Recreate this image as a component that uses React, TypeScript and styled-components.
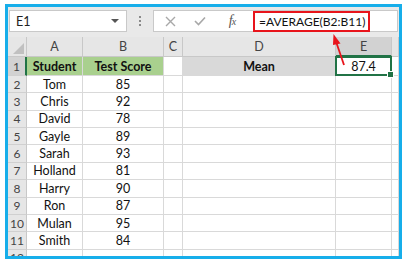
import React from "react";
import styled, { createGlobalStyle } from "styled-components";

const Global = createGlobalStyle`
  html, body { margin: 0; padding: 0; background: #ffffff; }
  body { font-family: Lato, "Open Sans", sans-serif; }
`;

const Frame = styled.div`
  position: relative;
  margin: 4px 0 0 5px;
  width: 397px;
  height: 255px;
  box-sizing: border-box;
  border: 3px solid #17aeea;
  overflow: hidden;
  background: #ffffff;
  display: flex;
  flex-direction: column;
`;

const Toolbar = styled.div`
  height: 30px;
  flex: none;
  background: #e9e9e9;
  display: flex;
  align-items: flex-start;
  padding: 3px 1px 0 1px;
  box-sizing: border-box;
`;

const NameBox = styled.div`
  position: relative;
  width: 118px;
  height: 22px;
  box-sizing: border-box;
  background: #fff;
  border: 1px solid #c9c9c9;
  font-size: 12.5px;
  color: #222;
  display: flex;
  align-items: center;
  padding-left: 6px;
`;

const DropArrow = styled.span`
  position: absolute;
  right: 7px;
  top: 8px;
  width: 0;
  height: 0;
  border-left: 4px solid transparent;
  border-right: 4px solid transparent;
  border-top: 4px solid #555;
`;

const Dots = styled.div`
  width: 26px;
  height: 22px;
  display: flex;
  flex-direction: column;
  align-items: center;
  justify-content: center;
  gap: 2px;
`;

const Dot = styled.span`
  width: 2px;
  height: 2px;
  background: #8a8a8a;
`;

const FormulaBox = styled.div`
  flex: 1;
  height: 22px;
  box-sizing: border-box;
  background: #fff;
  border: 1px solid #c9c9c9;
  display: flex;
  align-items: center;
`;

const IconSlot = styled.div<{ $w: number }>`
  width: ${(p) => p.$w}px;
  height: 20px;
  display: flex;
  align-items: center;
  justify-content: center;
  flex: none;
`;

const Fx = styled.span`
  font-family: "Liberation Serif", serif;
  font-style: italic;
  font-size: 14px;
  color: #555;
  letter-spacing: -1px;
  small { font-size: 10px; }
`;

const FormulaText = styled.div`
  margin-left: 3px;
  height: 21px;
  box-sizing: border-box;
  border: 2px solid #e8141b;
  padding: 0 0 0 4px;
  display: flex;
  align-items: center;
  font-size: 12px;
  color: #111;
  width: 117px;
  white-space: nowrap;
`;

const Grid = styled.div`
  display: grid;
  grid-template-columns: 19px 56px 81px 19px 153px 56px 1fr;
  grid-template-rows: 20px 19px repeat(10, 17.36px) 17px;
  flex: 1;
  overflow: hidden;
`;

const Corner = styled.div`
  position: relative;
  background: #e6e6e6;
  border-right: 1px solid #c8c8c8;
  border-bottom: 1px solid #c8c8c8;
  box-sizing: border-box;
  &::after {
    content: "";
    position: absolute;
    right: 2px;
    bottom: 2px;
    width: 0;
    height: 0;
    border-left: 11px solid transparent;
    border-bottom: 11px solid #c0c0c0;
  }
`;

const ColHead = styled.div<{ $active?: boolean }>`
  background: ${(p) => (p.$active ? "#d2d2d2" : "#e6e6e6")};
  border-right: 1px solid #c8c8c8;
  border-bottom: ${(p) => (p.$active ? "2px solid #217346" : "1px solid #c8c8c8")};
  box-sizing: border-box;
  display: flex;
  align-items: center;
  justify-content: center;
  font-size: 12.5px;
  color: #444;
`;

const RowHead = styled.div<{ $active?: boolean }>`
  background: ${(p) => (p.$active ? "#d2d2d2" : "#e6e6e6")};
  border-right: ${(p) => (p.$active ? "2px solid #217346" : "1px solid #c8c8c8")};
  border-bottom: 1px solid #d0d0d0;
  box-sizing: border-box;
  display: flex;
  align-items: center;
  justify-content: center;
  font-size: 12px;
  color: #444;
`;

const Cell = styled.div<{ $bg?: string; $bold?: boolean }>`
  background: ${(p) => p.$bg || "#fff"};
  border-right: 1px solid #d9d9d9;
  border-bottom: 1px solid #d9d9d9;
  box-sizing: border-box;
  display: flex;
  align-items: center;
  justify-content: center;
  font-size: 12.5px;
  font-weight: ${(p) => (p.$bold ? 700 : 400)};
  color: #111;
  white-space: nowrap;
  overflow: hidden;
`;

const SelectedCell = styled.div`
  position: relative;
  border: 2px solid #217346;
  box-sizing: border-box;
  display: flex;
  align-items: center;
  justify-content: center;
  font-size: 12.5px;
  color: #111;
  background: #fff;
  margin: -1px 0 0 -1px;
  &::after {
    content: "";
    position: absolute;
    right: -4px;
    bottom: -4px;
    width: 5px;
    height: 5px;
    background: #217346;
    border: 1px solid #fff;
  }
`;

const Arrow = styled.svg`
  position: absolute;
  left: 0;
  top: 0;
  pointer-events: none;
`;

const data: [string, number][] = [
  ["Tom", 85],
  ["Chris", 92],
  ["David", 78],
  ["Gayle", 89],
  ["Sarah", 93],
  ["Holland", 81],
  ["Harry", 90],
  ["Ron", 87],
  ["Mulan", 95],
  ["Smith", 84],
];

export default function App() {
  return (
    <>
      <Global />
      <Frame>
        <Toolbar>
          <NameBox>
            E1
            <DropArrow />
          </NameBox>
          <Dots>
            <Dot />
            <Dot />
            <Dot />
          </Dots>
          <FormulaBox>
            <IconSlot $w={32}>
              <svg width="11" height="11" viewBox="0 0 11 11">
                <path d="M1 1 L10 10 M10 1 L1 10" stroke="#a8a8a8" strokeWidth="1.4" fill="none" />
              </svg>
            </IconSlot>
            <IconSlot $w={28}>
              <svg width="12" height="10" viewBox="0 0 12 10">
                <path d="M1 5 L4.5 8.5 L11 1.5" stroke="#a8a8a8" strokeWidth="1.6" fill="none" />
              </svg>
            </IconSlot>
            <IconSlot $w={36}>
              <Fx>
                f<small>x</small>
              </Fx>
            </IconSlot>
            <FormulaText>=AVERAGE(B2:B11)</FormulaText>
          </FormulaBox>
        </Toolbar>
        <Grid>
          <Corner />
          <ColHead>A</ColHead>
          <ColHead>B</ColHead>
          <ColHead>C</ColHead>
          <ColHead>D</ColHead>
          <ColHead $active>E</ColHead>
          <ColHead />

          <RowHead $active>1</RowHead>
          <Cell $bg="#a9d08e" $bold>
            Student
          </Cell>
          <Cell $bg="#a9d08e" $bold>
            Test Score
          </Cell>
          <Cell />
          <Cell $bg="#d9d9d9" $bold>
            Mean
          </Cell>
          <SelectedCell>87.4</SelectedCell>
          <Cell />

          {data.map(([name, score], i) => (
            <React.Fragment key={name}>
              <RowHead>{i + 2}</RowHead>
              <Cell>{name}</Cell>
              <Cell>{score}</Cell>
              <Cell />
              <Cell />
              <Cell />
              <Cell />
            </React.Fragment>
          ))}
          <RowHead>12</RowHead>
          <Cell />
          <Cell />
          <Cell />
          <Cell />
          <Cell />
          <Cell />
        </Grid>
        <Arrow width="397" height="255" viewBox="0 0 397 255">
          <line x1="336" y1="58" x2="328.5" y2="36" stroke="#e8141b" strokeWidth="1.8" />
          <polygon points="325.5,27 332.5,36.5 325,38" fill="#e8141b" />
        </Arrow>
      </Frame>
    </>
  );
}
